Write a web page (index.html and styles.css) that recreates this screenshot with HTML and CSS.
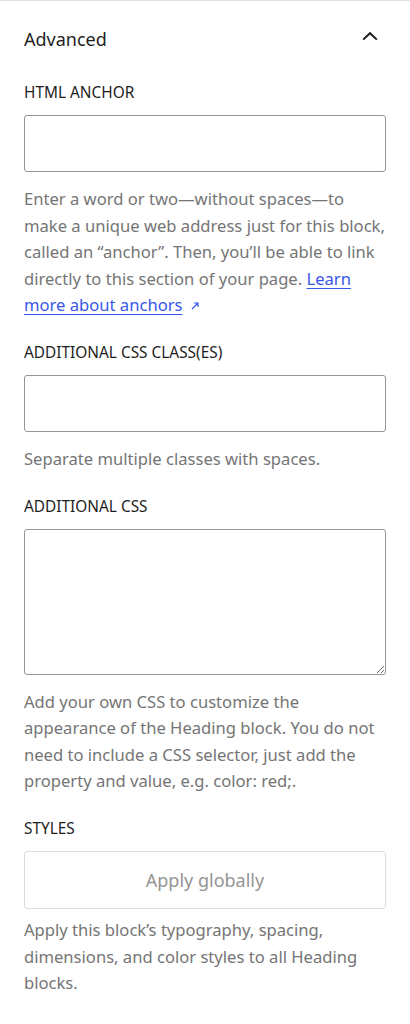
FILE: index.html
```html
<!DOCTYPE html>
<html lang="en">
<head>
<meta charset="utf-8">
<title>Advanced</title>
<link rel="stylesheet" href="styles.css">
</head>
<body>
<div class="panel">
  <div class="panel-header">
    <h2 class="panel-title">Advanced</h2>
    <svg class="chevron" width="22" height="22" viewBox="0 0 24 24" aria-hidden="true"><path d="M4.5 10.5 L12 3.5 L19.5 10.5" fill="none" stroke="#1e1e1e" stroke-width="2.2"/></svg>
  </div>

  <div class="control">
    <label class="label" for="anchor">HTML ANCHOR</label>
    <input class="field" id="anchor" type="text">
    <p class="help help-field">Enter a word or two—without spaces—to make a unique web address just for this block, called an “anchor”. Then, you’ll be able to link directly to this section of your page. <a class="link" href="#">Learn more about anchors</a><svg class="ext" width="12" height="12" viewBox="0 0 12 12" aria-hidden="true"><path d="M3 9 L9 3 M5 3 H9 V7" fill="none" stroke="#3858e9" stroke-width="1.2"/></svg></p>
  </div>

  <div class="control">
    <label class="label" for="classes">ADDITIONAL CSS CLASS(ES)</label>
    <input class="field" id="classes" type="text">
    <p class="help help-field">Separate multiple classes with spaces.</p>
  </div>

  <div class="control">
    <label class="label" for="css">ADDITIONAL CSS</label>
    <textarea class="field area" id="css"></textarea>
    <p class="help help-field">Add your own CSS to customize the appearance of the Heading block. You do not need to include a CSS selector, just add the property and value, e.g. color: red;.</p>
  </div>

  <div class="control">
    <div class="label">STYLES</div>
    <button class="apply" type="button">Apply globally</button>
    <p class="help help-button">Apply this block’s typography, spacing, dimensions, and color styles to all Heading blocks.</p>
  </div>
</div>
</body>
</html>
```

FILE: styles.css
```css
html, body {
  margin: 0;
  padding: 0;
  background: #ffffff;
}

body {
  font-family: "Noto Sans", "Open Sans", sans-serif;
  color: #1e1e1e;
}

.panel {
  border-top: 1px solid #e0e0e0;
  padding: 25px 24px 40px;
}

.panel-header {
  display: flex;
  align-items: center;
  justify-content: space-between;
  height: 26px;
}

.panel-title {
  margin: 0;
  font-size: 18px;
  font-weight: 400;
  line-height: 26px;
  color: #1e1e1e;
}

.chevron {
  margin-right: 5px;
  margin-top: 3px;
}

.control {
  display: flex;
  flex-direction: column;
  margin-top: 24px;
}

.panel-header + .control {
  margin-top: 31px;
}

.label {
  display: block;
  font-size: 15.4px;
  line-height: 20px;
  font-weight: 400;
  color: #1e1e1e;
  margin-bottom: 12px;
}

.field {
  box-sizing: border-box;
  width: 100%;
  height: 57px;
  margin: 0;
  border: 1px solid #949494;
  border-radius: 3px;
  background: #fff;
  font: inherit;
}

.area {
  height: 146px;
  resize: vertical;
}

.help {
  margin: 0;
  font-size: 16.6px;
  line-height: 26.6px;
  color: #757575;
}

.help-field {
  margin-top: 14px;
}

.help-button {
  margin-top: 8px;
}

.link {
  color: #3858e9;
  text-decoration: underline;
  text-underline-offset: 3px;
}

.ext {
  margin-left: 6px;
  vertical-align: -1px;
}

.apply {
  box-sizing: border-box;
  width: 100%;
  height: 58px;
  border: 1px solid #dddddd;
  border-radius: 3px;
  background: #fff;
  color: #949494;
  font-family: inherit;
  font-size: 18px;
  cursor: default;
}
```
